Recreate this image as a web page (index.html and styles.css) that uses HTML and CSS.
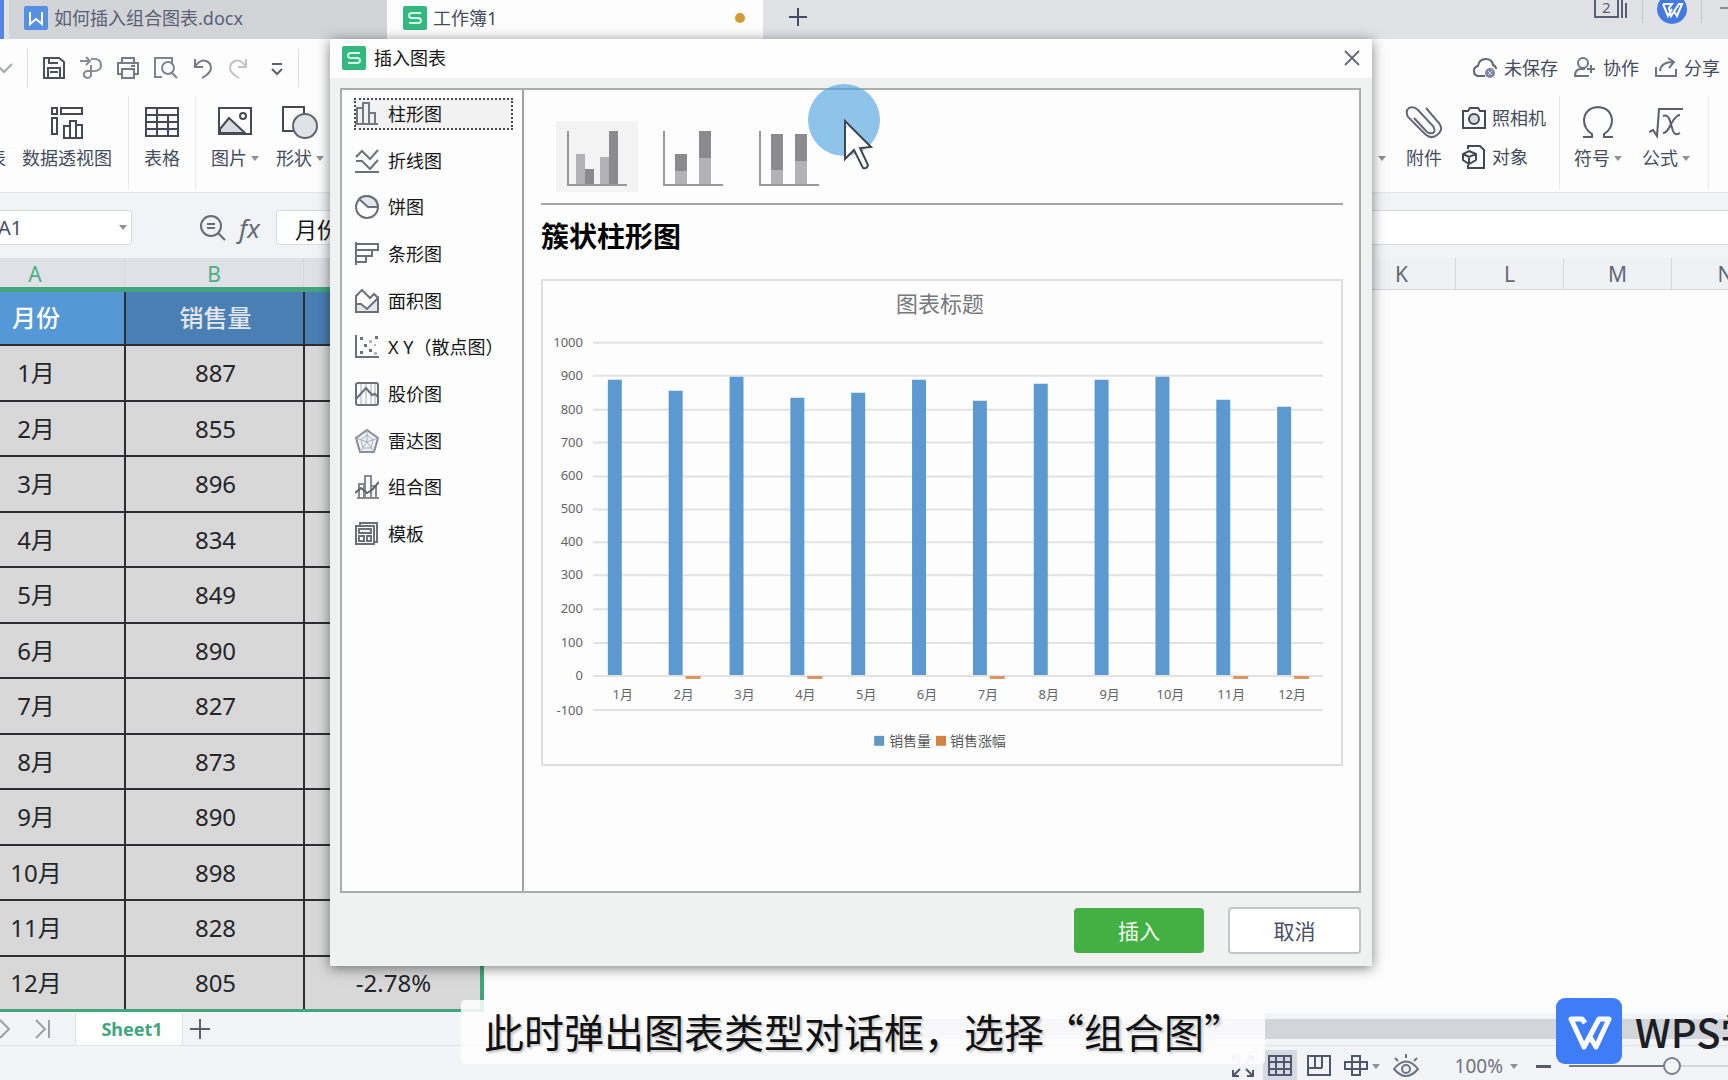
FILE: index.html
```html
<!DOCTYPE html>
<html lang="zh-CN">
<head>
<meta charset="utf-8">
<title>工作簿1</title>
<link rel="stylesheet" href="styles.css">
</head>
<body>
<header class="tabbar">
  <span class="home-edge"></span>
  <button class="doc-tab doc-tab-first"><svg class="badge" viewBox="0 0 24 24"><rect width="24" height="24" rx="2" fill="#5590e2"/><path d="M6 6v12l6-5 6 5V6" fill="none" stroke="#fff" stroke-width="2"/></svg>如何插入组合图表.docx</button>
  <button class="doc-tab doc-tab-active"><svg class="badge" viewBox="0 0 24 24"><rect width="24" height="24" rx="2" fill="#33b87d"/><path d="M18 7H9Q6 7 6 9.500T9 12h6q3 0 3 2.500T15 17H6" fill="none" stroke="#d4ffea" stroke-width="2"/></svg>工作簿1<i class="unsaved-dot"></i></button>
  <button class="new-tab" aria-label="新建"><svg width="18" height="18" viewBox="0 0 18 18"><path d="M9 0v18M0 9h18" stroke="#474c66" stroke-width="2"/></svg></button>
  <div class="window-tools">
    <svg width="34" height="20" viewBox="0 0 34 20"><path d="M1 0v17h23V0M28 0v18M32 3v15" fill="none" stroke="#565e78" stroke-width="2"/><text x="8" y="13" class="count-text">2</text></svg>
    <i class="tool-rule"></i>
    <svg width="30" height="26" viewBox="0 0 30 26"><circle cx="15" cy="9" r="15" fill="#457be0"/><path d="M6 4h9l-3 4 2 8 8-12h3l-5 12-3-5M6 4l5 12 4-7" fill="none" stroke="#fff" stroke-width="2"/></svg>
    <i class="tool-rule"></i>
    <svg width="12" height="20" viewBox="0 0 12 20"><path d="M4 8h8" stroke="#8b8e9b" stroke-width="2"/></svg>
  </div>
</header>

<div class="quickbar">
  <div class="quick-left">
    <svg width="12" height="24" viewBox="0 0 12 24"><path d="M-4 8l8 8 8-8" fill="none" stroke="#a5a8af" stroke-width="2"/></svg>
    <i class="rule"></i>
    <svg width="22" height="24" viewBox="0 0 22 24"><path d="M1 2h15l5 4v16H1zM5 22V12h12v10M6 2v5h9M7 16h8" fill="none" stroke="#4c505c" stroke-width="2"/></svg>
    <svg width="22" height="24" viewBox="0 0 22 24"><path d="M0 5h9M6 1l4 4-4 4M11 3q10-1 10 6t-10 6H7q-4 1-3 5 4 4 7 0V9" fill="none" stroke="#858a94" stroke-width="2"/></svg>
    <svg width="22" height="24" viewBox="0 0 22 24"><path d="M5 7V2h12v5M5 18H1V7h20v11h-4M5 13h12v9H5zM14 10h4" fill="none" stroke="#777b86" stroke-width="2"/></svg>
    <svg width="24" height="24" viewBox="0 0 24 24"><path d="M8 21H1V2h17v5M17 16l6 6" fill="none" stroke="#80848d" stroke-width="2"/><circle cx="14" cy="12" r="6" fill="none" stroke="#80848d" stroke-width="2"/></svg>
    <svg width="20" height="24" viewBox="0 0 20 24"><path d="M2 3v8h8M2 11q5-8 11-6 5 2 5 7t-9 10" fill="none" stroke="#777c87" stroke-width="2"/></svg>
    <svg width="20" height="24" viewBox="0 0 20 24"><path d="M18 3v8h-8M18 11Q13 3 7 5q-5 2-5 7t9 10" fill="none" stroke="#c1c3c8" stroke-width="2"/></svg>
    <svg width="12" height="24" viewBox="0 0 12 24"><path d="M1 8h10M1 13l5 5 5-5" fill="none" stroke="#5d616c" stroke-width="2"/></svg>
    <i class="rule"></i>
  </div>
  <div class="quick-right">
    <button class="link-tool tool-save"><svg width="24" height="22" viewBox="0 0 24 22"><path d="M12 19H6q-5 0-5-5 0-4 4-5 1-7 8-7 6 0 7 6 3 1 3 4" fill="none" stroke="#5f6472" stroke-width="2"/><circle cx="17" cy="16" r="5" fill="#8187a0"/><path d="M15 14l4 4M19 14l-4 4" stroke="#d7dae5"/></svg>未保存</button>
    <button class="link-tool tool-team"><svg width="22" height="22" viewBox="0 0 22 22"><circle cx="9" cy="6" r="5" fill="none" stroke="#6f7482" stroke-width="2"/><path d="M15 19H1q0-7 6-7h4M13 12h8M17 8v8" fill="none" stroke="#6f7482" stroke-width="2"/></svg>协作</button>
    <button class="link-tool"><svg width="22" height="22" viewBox="0 0 22 22"><path d="M1 10v9h20v-7M5 14q1-9 13-9M13 1l6 4-5 6" fill="none" stroke="#6f7482" stroke-width="2"/></svg>分享</button>
  </div>
</div>

<div class="ribbon">
  <div class="ribbon-left">
    <button class="tool tool-cut">表</button>
    <button class="tool tool-pivot"><svg width="34" height="34" viewBox="0 0 34 34"><path d="M2 2h5v6H2zM11 2h21v6H11zM2 12h5v16H2zM14 32V20h6v12zM20 32V15h6v17zM26 32V19h6v13z" fill="#fff" stroke="#454955" stroke-width="2"/></svg><span>数据透视图</span></button>
    <i class="ribbon-rule"></i>
    <button class="tool tool-table"><svg width="34" height="34" viewBox="0 0 34 34"><path d="M1 2h32v28H1zM1 9h32M1 16h32M1 23h32M12 2v28M23 9v21" fill="none" stroke="#454955" stroke-width="2"/></svg><span>表格</span></button>
    <i class="ribbon-rule"></i>
    <button class="tool tool-picture"><svg width="34" height="34" viewBox="0 0 34 34"><path d="M1 2h32v26H1z" fill="#fff" stroke="#454955" stroke-width="2"/><path d="M2 23l9-11 16 15H2z" fill="#d9dbe2" stroke="#454955" stroke-width="2"/><circle cx="25" cy="10" r="3" fill="none" stroke="#454955" stroke-width="2"/></svg><span>图片<i class="caret"></i></span></button>
    <button class="tool tool-shape"><svg width="36" height="34" viewBox="0 0 36 34"><path d="M1 1h21v24H1z" fill="#fff" stroke="#454955" stroke-width="2"/><circle cx="23" cy="20" r="12" fill="#e1e2e8" stroke="#5f6370" stroke-width="2"/></svg><span>形状<i class="caret"></i></span></button>
  </div>
  <div class="ribbon-right">
    <i class="caret caret-alone"></i>
    <button class="tool tool-clip"><svg width="38" height="34" viewBox="0 0 38 34"><path d="M21 2l13 15q5 7-2 12-6 5-13-2L3 11Q0 5 4 2q5-2 9 2l15 16q3 5 0 7-3 1-6-1L9 12" fill="none" stroke="#646875" stroke-width="2"/></svg><span>附件</span></button>
    <div class="tool-stack">
      <button class="link-tool"><svg width="24" height="24" viewBox="0 0 24 24"><path d="M1 5h5l2-3h8l2 3h5v17H1z" fill="none" stroke="#454955" stroke-width="2"/><circle cx="12" cy="13" r="5" fill="#d9dbe2" stroke="#454955" stroke-width="2"/></svg>照相机</button>
      <button class="link-tool"><svg width="24" height="24" viewBox="0 0 24 24"><path d="M6 4V1h12l4 4v18H6v-3" fill="none" stroke="#454955" stroke-width="2"/><path d="M7 6l7 3v6l-7 4-6-4V9zM1 9l6 3 7-3M7 12v7" fill="none" stroke="#454955" stroke-width="2"/></svg>对象</button>
    </div>
    <i class="ribbon-rule"></i>
    <button class="tool tool-symbol"><svg width="32" height="34" viewBox="0 0 32 34"><path d="M1 31h9v-3Q2 23 2 14 3 2 16 1q13 1 14 13 0 9-8 14v3h9" fill="none" stroke="#5a5e6a" stroke-width="2"/></svg><span>符号<i class="caret"></i></span></button>
    <button class="tool tool-formula"><svg width="34" height="34" viewBox="0 0 34 34"><path d="M0 26l4-2 4 6 2-27h24M14 10q5-2 7 5l3 10q2 5 7 2M31 9q-4 0-9 9-4 9-8 9" fill="none" stroke="#5a5e6a" stroke-width="2"/></svg><span>公式<i class="caret"></i></span></button>
    <i class="ribbon-rule"></i>
  </div>
</div>

<div class="formula-bar">
  <div class="name-box"><input class="name-input" aria-label="名称框" value="A1"><i class="caret"></i></div>
  <svg class="find-icon" width="26" height="26" viewBox="0 0 26 26"><circle cx="11" cy="11" r="10" fill="none" stroke="#666b78" stroke-width="2"/><path d="M18 18l7 7M7 9h8M7 13h8" stroke="#666b78" stroke-width="2"/></svg>
  <span class="fx">fx</span>
  <input class="formula-input" aria-label="编辑栏" value="月份">
</div>

<main class="sheet">
  <div class="col-heads">
    <span class="col col-data">A</span><span class="col col-data">B</span><span class="col col-data"></span><span class="col col-wide"></span><span class="col"></span><span class="col"></span><span class="col"></span><span class="col"></span><span class="col"></span><span class="col"></span><span class="col">K</span><span class="col">L</span><span class="col">M</span><span class="col">N</span>
  </div>
  <div class="selection">
    <table class="grid">
      <thead><tr><th class="active-cell">月份</th><th>销售量</th><th></th></tr></thead>
      <tbody>
        <tr><td>1月</td><td>887</td><td></td></tr>
        <tr><td>2月</td><td>855</td><td></td></tr>
        <tr><td>3月</td><td>896</td><td></td></tr>
        <tr><td>4月</td><td>834</td><td></td></tr>
        <tr><td>5月</td><td>849</td><td></td></tr>
        <tr><td>6月</td><td>890</td><td></td></tr>
        <tr><td>7月</td><td>827</td><td></td></tr>
        <tr><td>8月</td><td>873</td><td></td></tr>
        <tr><td>9月</td><td>890</td><td></td></tr>
        <tr><td>10月</td><td>898</td><td></td></tr>
        <tr><td>11月</td><td>828</td><td></td></tr>
        <tr><td>12月</td><td>805</td><td>-2.78%</td></tr>
      </tbody>
    </table>
  </div>
</main>

<div class="sheet-tabs">
  <svg class="nav-arrows" width="52" height="22" viewBox="0 0 52 22"><path d="M0 2l9 9-9 9M36 2l9 9-9 9M49 2v18" fill="none" stroke="#9c9fa7" stroke-width="2"/></svg>
  <button class="sheet-tab">Sheet1</button>
  <button class="new-sheet" aria-label="新建工作表"><svg width="20" height="20" viewBox="0 0 20 20"><path d="M10 0v20M0 10h20" stroke="#5c606b" stroke-width="2"/></svg></button>
  <div class="scroll-track"></div>
</div>

<footer class="statusbar">
  <svg class="status-full" width="22" height="22" viewBox="0 0 22 22"><path d="M1 7V1h6M15 1h6v6M1 1l7 7M21 1l-7 7" fill="none" stroke="#b9bcc3" stroke-width="2"/><path d="M1 15v6h6M15 21h6v-6M1 21l7-7M21 21l-7-7" fill="none" stroke="#4f5564" stroke-width="2"/></svg>
  <button class="view-btn view-active" aria-label="普通视图"><svg width="24" height="22" viewBox="0 0 24 22"><path d="M1 1h22v19H1zM1 7h22M1 14h22M8 1v19M16 1v19" fill="none" stroke="#4f5670" stroke-width="2"/></svg></button>
  <button class="view-btn" aria-label="分页预览"><svg width="24" height="22" viewBox="0 0 24 22"><path d="M1 1h22v19H1zM8 1v12M15 1v12M1 13h14" fill="none" stroke="#4f5670" stroke-width="2"/></svg></button>
  <button class="view-btn view-layout" aria-label="页面布局"><svg width="24" height="22" viewBox="0 0 24 22"><path d="M8 1h8v19H8zM1 7h22v7H1z" fill="none" stroke="#4f5670" stroke-width="2"/></svg><i class="caret"></i></button>
  <button class="view-btn view-eye" aria-label="护眼模式"><svg width="26" height="24" viewBox="0 0 26 24"><path d="M1 15q12-15 24 0-12 14-24 0zM2 4l3 3M13 0v4M24 4l-3 3" fill="none" stroke="#6d7284" stroke-width="2"/><circle cx="13" cy="15" r="4" fill="none" stroke="#6d7284" stroke-width="2"/></svg></button>
  <button class="zoom-value">100%<i class="caret"></i></button>
  <i class="zoom-minus"></i>
  <input class="zoom-slider" type="range" min="0" max="200" value="133" aria-label="缩放">
</footer>

<section class="dialog" role="dialog" aria-labelledby="dlg-title">
  <header class="dialog-title">
    <svg class="badge" viewBox="0 0 24 24"><rect width="24" height="24" rx="2" fill="#33b87d"/><path d="M18 7H9Q6 7 6 9.500T9 12h6q3 0 3 2.500T15 17H6" fill="none" stroke="#d4ffea" stroke-width="2"/></svg>
    <span id="dlg-title">插入图表</span>
    <button class="close" aria-label="关闭"><svg width="16" height="16" viewBox="0 0 16 16"><path d="M1 1l14 14M15 1L1 15" stroke="#686c7b" stroke-width="2"/></svg></button>
  </header>
  <div class="dialog-body">
    <nav class="types">
      <button class="type type-active"><svg viewBox="0 0 24 24"><path d="M2 22V6h6v16M8 22V1h6v21M14 22V11h6v11M0 22h23" fill="none" stroke="#737786" stroke-width="2"/></svg>柱形图</button>
      <button class="type"><svg viewBox="0 0 24 24"><path d="M1 8l6-6 8 8 8-9M1 12h6l8 8 8-9M0 23h24" fill="none" stroke="#6d7079" stroke-width="2"/></svg>折线图</button>
      <button class="type"><svg viewBox="0 0 24 24"><circle cx="12" cy="12" r="11" fill="#fff" stroke="#6d7079" stroke-width="2"/><path d="M4 4l9 8h10Q22 2 12 1 7 1 4 4z" fill="#e4e5ed" stroke="#6d7079" stroke-width="2"/></svg>饼图</button>
      <button class="type"><svg viewBox="0 0 24 24"><path d="M1 0v23M1 2h22v6H1M17 8v6H1M11 14v6H1" fill="none" stroke="#6d7079" stroke-width="2"/></svg>条形图</button>
      <button class="type"><svg viewBox="0 0 24 24"><path d="M1 22V7l6-6 8 8 4-4 4 4v14H2z" fill="#fff" stroke="#6d7079" stroke-width="2"/><path d="M1 15h5l6 5 11-11v14H1z" fill="#e4e5ed" stroke="#6d7079" stroke-width="2"/></svg>面积图</button>
      <button class="type"><svg viewBox="0 0 24 24"><path d="M1 0v22h23" fill="none" stroke="#6d7079" stroke-width="2"/><path d="M5 2h3v3H5zM20 1h3v3h-3zM9 9h3v3H9zM5 16h3v3H5zM14 14h3v3h-3z" fill="#6d7079"/><path d="M14 5h3v3h-3zM19 17h3v3h-3zM19 9h2v2h-2z" fill="#b5b8c2"/></svg>X Y（散点图）</button>
      <button class="type"><svg viewBox="0 0 24 24"><path d="M6 2v20M11 2v20M16 2v20M20 2v20" stroke="#d3d5dd" stroke-width="2"/><rect x="1" y="1" width="22" height="22" rx="2" fill="none" stroke="#6d7079" stroke-width="2"/><path d="M1 17L11 6l6 7 3-1 3 3" fill="none" stroke="#6d7079" stroke-width="2"/></svg>股价图</button>
      <button class="type"><svg viewBox="0 0 24 24"><path d="M12 1l11 8-4 14H5L1 9z" fill="#eef0f6" stroke="#8a8e9a" stroke-width="2"/><path d="M12 6l6 5-2 8H8l-2-8zM12 1v12M12 13L1 9M12 13l11-4M12 13L5 23M12 13l7 10" fill="none" stroke="#a9adbb"/></svg>雷达图</button>
      <button class="type"><svg viewBox="0 0 24 24"><path d="M4 23V9h5v14M10 23V1h6v22M16 23V11h5v12M2 23h22" fill="none" stroke="#858994" stroke-width="2"/><path d="M0 18l6-5 6 5 5-3 7-8" fill="none" stroke="#60636e" stroke-width="2"/></svg>组合图</button>
      <button class="type"><svg viewBox="0 0 24 24"><path d="M5 4V1h17v19h-3M1 4h18v18H1zM4 7h12v4H4zM4 14h5v5H4zM12 14h4v5h-4z" fill="none" stroke="#6d7079" stroke-width="2"/></svg>模板</button>
    </nav>
    <div class="preview">
      <div class="thumbs">
        <button class="thumb thumb-active" aria-label="簇状"><svg width="60" height="56" viewBox="0 0 60 56"><path d="M9 24h9v30H9zM33 27h9v27h-9z" fill="#b3b3b5"/><path d="M18 39h9v15h-9zM42 1h9v53h-9z" fill="#8b8b8d"/><path d="M1 1v54h59" fill="none" stroke="#98989b" stroke-width="2"/></svg></button>
        <button class="thumb" aria-label="堆积"><svg width="60" height="56" viewBox="0 0 60 56"><path d="M12 40h12v14H12zM36 28h12v26H36z" fill="#b3b3b5"/><path d="M12 24h12v17H12zM36 1h12v27H36z" fill="#8b8b8d"/><path d="M1 1v54h59" fill="none" stroke="#98989b" stroke-width="2"/></svg></button>
        <button class="thumb" aria-label="百分比堆积"><svg width="60" height="56" viewBox="0 0 60 56"><path d="M12 40h12v14H12zM36 31h12v23H36z" fill="#b3b3b5"/><path d="M12 4h12v36H12zM36 4h12v27H36z" fill="#8b8b8d"/><path d="M1 1v54h59" fill="none" stroke="#98989b" stroke-width="2"/></svg></button>
      </div>
      <h2 class="chart-name">簇状柱形图</h2>
      <svg class="chart" viewBox="0 0 800 484">
        <text x="398" y="31" class="chart-title">图表标题</text>
        <path d="M50 62h732M50 95h732M50 129h732M50 162h732M50 196h732M50 229h732M50 262h732M50 295h732M50 329h732M50 363h732M50 396h732M50 430h732" stroke="#e2e2e3" stroke-width="2"/>
        <g class="y-labels">
          <text x="40" y="66">1000</text><text x="40" y="99">900</text><text x="40" y="133">800</text><text x="40" y="166">700</text><text x="40" y="200">600</text><text x="40" y="233">500</text><text x="40" y="266">400</text><text x="40" y="299">300</text><text x="40" y="333">200</text><text x="40" y="367">100</text><text x="40" y="400">0</text><text x="40" y="435">-100</text>
        </g>
        <path d="M65 99h14v296h-14zM126 110h14v285h-14zM187 96h14v299h-14zM248 117h14v278h-14zM309 112h14v283h-14zM370 99h14v296h-14zM431 120h14v275h-14zM492 103h14v292h-14zM553 99h14v296h-14zM614 96h14v299h-14zM675 119h14v276h-14zM736 126h14v269h-14z" fill="#5b99d0"/>
        <path d="M143 396h15v3h-15zM265 396h15v3h-15zM448 396h15v3h-15zM692 396h15v3h-15zM753 396h15v3h-15z" fill="#dd9561"/>
        <g class="x-labels">
          <text x="80" y="419">1月</text><text x="141" y="419">2月</text><text x="202" y="419">3月</text><text x="263" y="419">4月</text><text x="324" y="419">5月</text><text x="385" y="419">6月</text><text x="446" y="419">7月</text><text x="507" y="419">8月</text><text x="568" y="419">9月</text><text x="629" y="419">10月</text><text x="690" y="419">11月</text><text x="751" y="419">12月</text>
        </g>
        <path d="M332 456h10v10h-10z" fill="#5f97c6"/><path d="M394 456h10v10h-10z" fill="#d18442"/>
        <text x="347" y="466" class="legend">销售量</text><text x="408" y="466" class="legend">销售涨幅</text>
      </svg>
    </div>
  </div>
  <footer class="dialog-actions">
    <button class="btn btn-primary">插入</button>
    <button class="btn">取消</button>
  </footer>
</section>

<i class="click-halo"></i>
<svg class="pointer" width="30" height="52" viewBox="0 0 30 52"><path d="M2 2v38l9-9 9 18q4 1 5-3l-8-17 11-1z" fill="#fff" stroke="#42474f" stroke-width="2"/></svg>

<p class="caption">此时弹出图表类型对话框，选择“组合图”</p>
<div class="brand">
  <svg width="66" height="66" viewBox="0 0 66 66"><rect width="66" height="66" rx="9" fill="#3f7df7"/><path d="M29 25l-3-4H15l13 28 15-28h10L40 49l-6-10" fill="none" stroke="#fff" stroke-width="5" stroke-linejoin="round"/></svg>
  <span>WPS学堂</span>
</div>
</body>
</html>
```
FILE: styles.css
```css
* { box-sizing: border-box; }

body {
  margin: 0;
  height: 100vh;
  display: flex;
  flex-direction: column;
  position: relative;
  overflow: hidden;
  background: #fdfdfd;
  color: #454c60;
  font: 18px/24px "Noto Sans", "Noto Sans CJK SC", sans-serif;
}

button, input {
  font: inherit;
  color: inherit;
  border: 0;
  padding: 0;
  margin: 0;
  background: none;
}

svg { flex: none; display: block; }
i { display: block; flex: none; }

.badge { width: 24px; height: 24px; }

.caret {
  border: 4px solid transparent;
  border-top: 5px solid #8d909a;
  border-bottom: 0;
}

/* Document tabs */
.tabbar {
  flex: none;
  height: 39px;
  display: flex;
  background: #e1e2e5;
}
.home-edge { width: 4px; background: #5585e4; margin-right: 5px; }
.doc-tab {
  display: flex;
  align-items: center;
  gap: 6px;
  padding: 0 18px 4px 15px;
  width: 378px;
  background: #d3d4d8;
  color: #5a6075;
}
.doc-tab-active { width: 376px; padding-left: 16px; background: #fdfdfd; color: #454c60; }
.unsaved-dot { width: 10px; height: 10px; border-radius: 50%; background: #d59a35; margin-left: auto; }
.new-tab { padding: 0 26px 6px; }
.window-tools { margin-left: auto; display: flex; gap: 14px; }
.tool-rule { width: 1px; height: 23px; background: #c5c6ca; }
.count-text { font-size: 15px; fill: #565e78; }

/* Quick access row */
.quickbar {
  flex: none;
  height: 57px;
  display: flex;
  justify-content: space-between;
  align-items: center;
  background: #fdfdfd;
}
.quick-left { display: flex; align-items: center; gap: 15px; }
.quick-left .rule { width: 1px; height: 38px; background: #dcdde0; }
.quick-left svg:nth-of-type(8) { margin-left: 8px; }
.quick-right { display: flex; gap: 16px; padding-right: 8px; }
.link-tool { display: flex; align-items: center; gap: 6px; white-space: nowrap; }
.quick-right .link-tool { gap: 7px; }

/* Ribbon */
.ribbon {
  flex: none;
  height: 96px;
  display: flex;
  justify-content: space-between;
  background: #fdfdfd;
}
.ribbon-left, .ribbon-right { display: flex; }
.ribbon-rule { width: 1px; height: 94px; background: #e8e9eb; }
.tool {
  display: flex;
  flex-direction: column;
  align-items: center;
  gap: 6px;
  padding-top: 10px;
  white-space: nowrap;
}
.tool span { display: flex; align-items: center; gap: 4px; }
.tool-cut { width: 18px; margin-left: -12px; padding-top: 50px; }
.tool-pivot { width: 122px; }
.tool-table { width: 66px; }
.tool-picture { width: 78px; }
.tool-shape { width: 52px; }
.caret-alone { margin: 60px 19px 0 0; }
.tool-clip { width: 38px; }
.tool-stack { display: flex; flex-direction: column; gap: 15px; padding: 10px 13px 0 19px; }
.ribbon-right .tool-symbol { width: 76px; }
.ribbon-right .tool-formula { width: 60px; margin-right: 12px; }
.ribbon-right > .ribbon-rule:last-child { margin-right: 19px; }

/* Formula bar */
.formula-bar {
  flex: none;
  height: 66px;
  display: flex;
  align-items: center;
  padding-top: 4px;
  background: #f2f3f6;
  border-top: 1px solid #e3e4e7;
}
.name-box {
  width: 132px;
  height: 35px;
  display: flex;
  align-items: center;
  justify-content: space-between;
  padding-right: 4px;
  background: #fff;
  border: 1px solid #d9dbdf;
  border-left: 0;
  border-radius: 0 3px 3px 0;
}
.name-input { width: 80px; font-size: 20px; margin-left: -2px; }
.find-icon { margin-left: 68px; }
.fx { margin-left: 13px; width: 37px; font: italic 26px/30px "Noto Sans", sans-serif; color: #666b78; }
.formula-input {
  flex: 1;
  height: 35px;
  padding-left: 18px;
  font-size: 22px;
  color: #16181c;
  background: #fff;
  border: 1px solid #d9dbdf;
  border-right: 0;
  border-radius: 3px 0 0 3px;
}

/* Worksheet */
.sheet { flex: 1; min-height: 0; overflow: hidden; }
.col-heads {
  display: flex;
  height: 32px;
  margin: 0 -54px;
  background: #f0f1f4;
  border-bottom: 1px solid #d5d7db;
}
.col {
  flex: none;
  width: 108px;
  border-right: 1px solid #d5d7db;
  text-align: center;
  font-size: 21px;
  line-height: 33px;
  color: #636878;
}
.col-data { width: 179px; height: 32px; background: #e0e1e7; color: #4ab083; }
.col-wide { width: 217px; }
.selection {
  width: 538px;
  margin: -3px 0 0 -54px;
  position: relative;
  border: solid #43a57e;
  border-width: 5px 4px 3px 0;
}
.grid {
  width: 100%;
  table-layout: fixed;
  border-collapse: separate;
  border-spacing: 0;
  font-size: 24px;
  text-align: center;
  color: #24262b;
}
.grid th, .grid td { height: 56px; padding: 0 0 0 2px; border: solid #2c2e32; border-width: 0 2px 2px 0; background: #d8d8d8; }
.grid th { height: 54px; width: 179px; font-weight: 500; color: #e3e6ec; background: #4a7fb3; }
.grid .active-cell { width: 180px; color: #fff; background: #5598d6; }
.grid tr:nth-child(even) td { height: 55px; }
.grid tr:last-child td { height: 52px; border-bottom: 0; }
.grid td:last-child, .grid th:last-child { width: auto; border-right: 0; }

/* Sheet tabs */
.sheet-tabs {
  flex: none;
  height: 33px;
  display: flex;
  align-items: center;
  background: #f2f4f7;
  border-bottom: 1px solid #dfe1e5;
}
.sheet-tab {
  width: 108px;
  height: 32px;
  margin-left: 23px;
  padding-left: 6px;
  background: #fff;
  border: solid #e0e2e6;
  border-width: 0 1px;
  font-size: 18px;
  font-weight: 700;
  color: #41a67b;
}
.new-sheet { margin: 0 7px; }
.scroll-track { flex: 1; height: 20px; margin-left: 600px; background: #d2d5d9; }

/* Status bar */
.statusbar {
  flex: none;
  height: 34px;
  display: flex;
  justify-content: flex-end;
  align-items: center;
  padding-top: 6px;
  background: #f2f4f7;
}
.status-full { margin-right: 9px; }
.view-btn { display: flex; align-items: center; justify-content: center; gap: 4px; width: 34px; height: 32px; }
.view-active { background: #d5d9e0; }
.view-btn + .view-btn { margin-left: 5px; }
.view-btn + .view-layout { width: 40px; margin-left: 6px; }
.view-btn + .view-eye { width: 26px; margin-left: 11px; }
.zoom-value { display: flex; align-items: center; gap: 7px; margin: 0 18px 0 36px; font-size: 19px; color: #6c7180; }
.zoom-minus { width: 15px; height: 3px; background: #565a6a; margin-right: 18px; }
.zoom-slider {
  appearance: none;
  width: 159px;
  height: 18px;
  background: linear-gradient(90deg, #747986 60%, #d5d7dc 60%) center / 100% 2px no-repeat;
}
.zoom-slider::-webkit-slider-thumb {
  appearance: none;
  width: 18px;
  height: 18px;
  border: 2px solid #7b7f8a;
  border-radius: 50%;
  background: #f4f5f7;
}

/* Insert-chart window */
.dialog {
  position: absolute;
  left: 330px;
  top: 39px;
  width: 1042px;
  height: 927px;
  display: flex;
  flex-direction: column;
  background: #f0f1f1;
  box-shadow: 0 2px 12px rgba(0, 0, 0, 0.5);
}
.dialog-title {
  flex: none;
  height: 39px;
  display: flex;
  align-items: center;
  gap: 8px;
  padding: 0 12px 2px;
  background: #fefefe;
  color: #17181b;
}
.close { margin-left: auto; }
.dialog-body {
  flex: 1;
  display: flex;
  margin: 10px 11px 0 10px;
  background: #fdfdfd;
  border: 2px solid #abadad;
}
.types {
  width: 180px;
  height: 464px;
  padding: 8px 9px 4px 12px;
  display: flex;
  flex-direction: column;
  justify-content: space-between;
}
.type {
  height: 32px;
  display: flex;
  align-items: center;
  gap: 9px;
  padding-left: 1px;
  white-space: nowrap;
  color: #16171a;
}
.type svg { width: 24px; height: 24px; }
.type-active { background: #f2f2f3; outline: 2px dotted #4c4d50; outline-offset: -2px; }
.preview { flex: 1; border-left: 2px solid #a0a1a2; padding: 31px 16px 0 17px; }
.thumbs {
  display: flex;
  gap: 14px;
  height: 84px;
  padding: 0 0 11px 15px;
  border-bottom: 2px solid #a6a6a8;
}
.thumb { width: 82px; padding: 3px 0 0 11px; }
.thumb-active { background: #f3f3f4; }
.chart-name { margin: 12px 0 24px; font-size: 28px; line-height: 38px; font-weight: 700; color: #000; }
.chart { width: 100%; border: 2px solid #dededf; }
.chart-title { font-size: 22px; fill: #77787b; text-anchor: middle; }
.y-labels { font-size: 13px; text-anchor: end; fill: #626468; }
.x-labels { font-size: 13px; text-anchor: middle; fill: #626468; }
.legend { font-size: 14px; fill: #55575b; }
.dialog-actions {
  flex: none;
  height: 73px;
  display: flex;
  align-items: center;
  justify-content: flex-end;
  gap: 24px;
  padding: 2px 11px 0;
}
.btn {
  width: 133px;
  height: 47px;
  font-size: 21px;
  color: #4a5066;
  background: #fff;
  border: 2px solid #c3c5ca;
  border-radius: 4px;
}
.btn-primary { width: 130px; height: 45px; border: 0; background: #42b043; color: #f2fff2; }

/* Recording overlays */
.click-halo {
  position: absolute;
  left: 808px;
  top: 84px;
  width: 72px;
  height: 72px;
  border-radius: 50%;
  background: rgba(75, 160, 222, 0.62);
}
.pointer { position: absolute; left: 843px; top: 119px; }
.caption {
  position: absolute;
  left: 461px;
  top: 1000px;
  width: 804px;
  height: 64px;
  margin: 0;
  padding-left: 23px;
  border-radius: 4px;
  background: rgba(253, 253, 254, 0.88);
  font: 40px/62px "Noto Sans CJK SC", sans-serif;
  color: #111;
  text-shadow: 2px 2px 2px rgba(0, 0, 0, 0.2);
  white-space: nowrap;
}
.brand {
  position: absolute;
  left: 1556px;
  top: 998px;
  right: 0;
  display: flex;
  align-items: center;
  gap: 13px;
  overflow: hidden;
  white-space: nowrap;
  font: 500 40px/66px "Noto Sans CJK SC", sans-serif;
  color: #1b1e24;
}
```
